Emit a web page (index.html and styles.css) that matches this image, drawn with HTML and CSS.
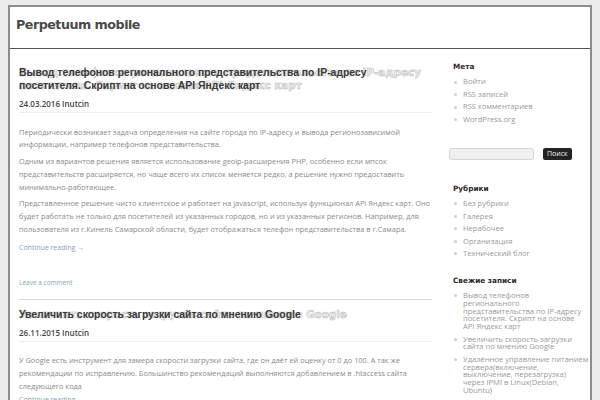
FILE: index.html
```html
<!DOCTYPE html>
<html lang="ru">
<head>
<meta charset="utf-8">
<title>Perpetuum mobile</title>
<link rel="stylesheet" href="styles.css">
</head>
<body>
<div class="page">
  <header class="site-header">
    <h1 class="site-title">Perpetuum mobile</h1>
  </header>
  <div class="main">
    <div class="content">
      <article class="post">
        <header class="post-header">
          <h2 class="post-title">
            <span class="ghost" aria-hidden="true">Вывод телефонов регионального представительства по IP-адресу<br>посетителя. Скрипт на основе API Яндекс карт</span>
            <a class="real" href="#">Вывод телефонов регионального представительства по IP-адресу<br>посетителя. Скрипт на основе API Яндекс карт</a>
          </h2>
          <div class="post-meta">24.03.2016 Inutcin</div>
        </header>
        <div class="entry">
          <p>Периодически возникает задача определения на сайте города по IP-адресу и вывода регионозависимой<br>информации, например телефонов представительства.</p>
          <p>Одним из вариантов решения является использование geoip-расширения PHP, особенно если мпсок<br>представительств расширяется, но чаще всего их список меняется редко, а решение нужно предоставить<br>минимально-работающее.</p>
          <p>Представленное решение чисто клиентское и работает на javascript, используя функционал API Яндекс карт. Оно<br>будет работать не только для посетителей из указанных городов, но и из указанных регионов. Например, для<br>пользователя из г.Кинель Самарской области, будет отображаться телефон представительства в г.Самара.</p>
          <p class="more"><a href="#">Continue reading →</a></p>
        </div>
        <footer class="post-footer"><a href="#">Leave a comment</a></footer>
      </article>
      <article class="post post-second">
        <header class="post-header">
          <h2 class="post-title">
            <span class="ghost" aria-hidden="true">Увеличить скорость загрузки сайта по мнению Google</span>
            <a class="real" href="#">Увеличить скорость загрузки сайта по мнению Google</a>
          </h2>
          <div class="post-meta">26.11.2015 Inutcin</div>
        </header>
        <div class="entry">
          <p>У Google есть инструмент для замера скорости загрузки сайта, где он даёт ей оценку от 0 до 100. А так же<br>рекомендации по исправлению. Большинство рекомендаций выполняются добавлением в .htaccess сайта<br>следующего кода<br><a class="more-link" href="#">Continue reading →</a></p>
        </div>
      </article>
    </div>
    <aside class="sidebar">
      <section class="widget widget-meta">
        <h3 class="widget-title">Мета</h3>
        <ul class="widget-list">
          <li><a href="#">Войти</a></li>
          <li><a href="#">RSS записей</a></li>
          <li><a href="#">RSS комментариев</a></li>
          <li><a href="#">WordPress.org</a></li>
        </ul>
      </section>
      <form class="search-form">
        <input class="search-input" type="text">
        <button class="search-btn" type="button">Поиск</button>
      </form>
      <section class="widget widget-cats">
        <h3 class="widget-title">Рубрики</h3>
        <ul class="widget-list">
          <li><a href="#">Без рубрики</a></li>
          <li><a href="#">Галерея</a></li>
          <li><a href="#">Нерабочее</a></li>
          <li><a href="#">Организация</a></li>
          <li><a href="#">Технический блог</a></li>
        </ul>
      </section>
      <section class="widget widget-recent">
        <h3 class="widget-title">Свежие записи</h3>
        <ul class="widget-list">
          <li><a href="#">Вывод телефонов<br>регионального<br>представительства по IP-адресу<br>посетителя. Скрипт на основе<br>API Яндекс карт</a></li>
          <li><a href="#">Увеличить скорость загрузки<br>сайта по мнению Google</a></li>
          <li><a href="#">Удалённое управление питанием<br>сервера(включение,<br>выключение, перезагрузка)<br>через IPMI в Linux(Debian,<br>Ubuntu)</a></li>
        </ul>
      </section>
    </aside>
  </div>
</div>
</body>
</html>
```

FILE: styles.css
```css
html, body {
  margin: 0;
  padding: 0;
}
body {
  background: #ececec;
  padding-top: 5px;
  font-family: "Open Sans", "Liberation Sans", sans-serif;
  overflow: hidden;
  height: 395px;
}
a {
  text-decoration: none;
  color: inherit;
}
.page {
  margin-left: 8px;
  width: 580px;
  border: 2px solid #8c8c8c;
  border-bottom: none;
  background: #fff;
  min-height: 400px;
}
.site-header {
  height: 42px;
  border-bottom: 1px solid #555;
  box-sizing: border-box;
  padding: 11px 6px 0;
}
.site-title {
  margin: 0;
  font-family: "DejaVu Sans", sans-serif;
  font-weight: bold;
  font-size: 12.7px;
  line-height: 14px;
  letter-spacing: -0.5px;
  color: #4a4a4a;
}
.main {
  display: flex;
  padding: 16.5px 0 0 9px;
  gap: 17px;
}
.content {
  width: 413px;
  flex: none;
}
.post-title {
  position: relative;
  margin: 0;
  font-family: "Liberation Sans", sans-serif;
  font-weight: bold;
  font-size: 10.4px;
  line-height: 13.5px;
}
.post-title .real {
  position: relative;
  color: #3a3a3a;
}
.post-title .ghost {
  position: absolute;
  left: 0;
  top: 0;
  font-family: "DejaVu Sans", sans-serif;
  font-size: 10.4px;
  white-space: nowrap;
  color: #f2f2f2;
  -webkit-text-stroke: 0.5px #b5b5b5;
}
.post-meta {
  margin-top: 6.5px;
  font-family: "Open Sans", sans-serif;
  font-weight: 600;
  font-size: 8px;
  line-height: 10px;
  color: #444;
}
.post-header {
  padding-bottom: 3px;
  border-bottom: 1px solid #ececec;
}
.entry {
  padding-top: 12.5px;
  font-size: 7.4px;
  line-height: 12.8px;
  color: #8a8a8a;
}
.entry p {
  margin: 0 0 4px;
  white-space: nowrap;
}
.entry .more a,
.entry .more-link,
.post-footer a {
  color: #7fa6b4;
}
.entry .more {
  margin-top: 6.5px;
  font-size: 7px;
}
.entry .more-link {
  font-size: 7px;
}
.post-footer {
  margin-top: 23px;
  font-size: 6.5px;
  line-height: 10px;
  padding-bottom: 11px;
  border-bottom: 1px solid #dcdcdc;
}
.post-second {
  padding-top: 7.5px;
}
.sidebar {
  width: 130px;
  flex: none;
  margin-top: -2.25px;
}
.widget {
  margin: 0;
}
.widget-title {
  margin: 0 0 4.75px 4px;
  font-family: "DejaVu Sans", sans-serif;
  font-weight: bold;
  font-size: 7.3px;
  line-height: 8px;
  color: #2a2a2a;
}
.widget-list {
  list-style: none;
  margin: 0;
  padding: 0 0 0 4px;
  font-size: 7.6px;
  line-height: 7.75px;
  color: #9a9a9a;
  white-space: nowrap;
}
.widget-list li {
  position: relative;
  padding: 2.375px 0 2.375px 10px;
}
.widget-list li::before {
  content: "";
  position: absolute;
  left: 1px;
  top: 4.5px;
  width: 3px;
  height: 3px;
  border-radius: 50%;
  background: #cfcfcf;
}
.search-form {
  display: flex;
  align-items: center;
  gap: 9px;
  margin: 22px 0 0;
}
.search-input {
  width: 85px;
  height: 12px;
  box-sizing: border-box;
  margin: 0;
  padding: 0;
  border: 1px solid #d6d6d6;
  border-radius: 3px;
  background: #f0f0f0;
}
.search-btn {
  margin: 0;
  padding: 0 4px;
  height: 12px;
  border: none;
  border-radius: 2px;
  background: #222;
  color: #eee;
  font-family: "Open Sans", sans-serif;
  font-size: 7px;
  line-height: 12px;
}
.widget-cats {
  margin-top: 25px;
}
.widget-recent {
  margin-top: 16.75px;
}
```
